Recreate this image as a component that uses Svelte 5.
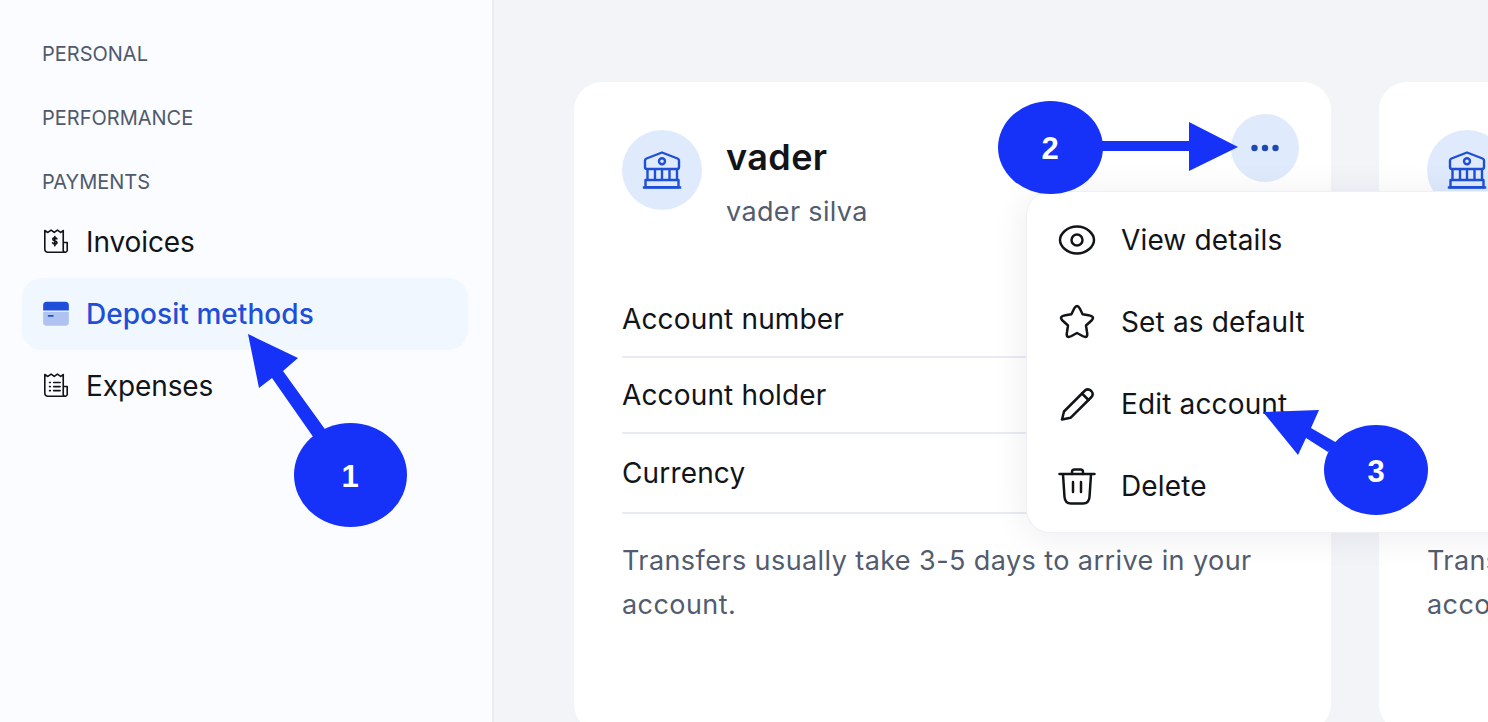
<script>
  const accounts = [
    { id: 1, name: 'vader', holder: 'vader silva', hasMenu: true },
    { id: 2, name: 'vader', holder: 'vader silva', hasMenu: false }
  ];
  const rows = ['Account number', 'Account holder', 'Currency'];
</script>

<div class="page">
  <aside class="sidebar">
    <div class="label">PERSONAL</div>
    <div class="label">PERFORMANCE</div>
    <div class="label open">PAYMENTS</div>
    <nav class="nav">
      <div class="nav-item">
        <svg class="nav-icon" viewBox="0 0 24 24" fill="none" stroke="currentColor" stroke-width="1.4" stroke-linejoin="round" stroke-linecap="round">
          <path d="M19 20.8H5a2.600 2.600 0 0 1-2.600-2.600V2.200L5 3.800l2.800-2 2.700 2 2.700-2 2.800 2 2.200-1.600v15.900a2 2 0 0 0 1.700 2.700 2 2 0 0 0 1.700-2.700v-5.700h-3.400" />
          <path d="M12.700 9.300c-.4-.5-.9-.8-1.700-.8-1 0-1.700.5-1.700 1.200 0 1.800 3.500.8 3.500 2.700 0 .8-.8 1.300-1.800 1.300-.8 0-1.500-.4-1.900-1M11 7.300v8" />
        </svg>
        <span>Invoices</span>
      </div>
      <div class="nav-item active">
        <svg class="nav-icon" viewBox="0 0 24 24">
          <path fill="#afc3f1" d="M1 10h22v9a3 3 0 0 1-3 3H4a3 3 0 0 1-3-3z" />
          <path fill="#1f4fd8" d="M4 1.500h16a3 3 0 0 1 3 3V9H1V4.500a3 3 0 0 1 3-3z" />
          <rect x="5" y="12.800" width="5" height="1.500" rx=".5" fill="#1f4fd8" />
        </svg>
        <span>Deposit methods</span>
      </div>
      <div class="nav-item">
        <svg class="nav-icon" viewBox="0 0 24 24" fill="none" stroke="currentColor" stroke-width="1.4" stroke-linejoin="round" stroke-linecap="round">
          <path d="M19 20.8H5a2.600 2.600 0 0 1-2.600-2.600V2.200L5 3.800l2.800-2 2.700 2 2.700-2 2.800 2 2.200-1.600v15.900a2 2 0 0 0 1.700 2.700 2 2 0 0 0 1.700-2.700v-5.700h-3.400" />
          <path d="M6.500 9h.6M10 9h5.500M6.500 12.500h.6M10 12.500h5.500M6.500 16h.6M10 16h5.500" />
        </svg>
        <span>Expenses</span>
      </div>
    </nav>
  </aside>

  <main class="content">
    {#each accounts as account (account.id)}
      <section class="card">
        <button class="more" aria-label="More actions">
          <svg width="28" height="8" viewBox="0 0 28 8" fill="#1e48b4">
            <circle cx="3.500" cy="4" r="3.200" />
            <circle cx="14" cy="4" r="3.200" />
            <circle cx="24.500" cy="4" r="3.200" />
          </svg>
        </button>

        <header class="head">
          <div class="bank">
            <svg width="40" height="40" viewBox="0 0 40 40" fill="none" stroke="#1f4fd8" stroke-width="2.400" stroke-linejoin="round">
              <path d="M20 2.500 4.500 8.500Q3 9.200 3 10.500V17q0 2 2 2h30q2 0 2-2v-6.500q0-1.300-1.500-2z" />
              <circle cx="20" cy="11.300" r="3" />
              <path d="M5.500 19v11M13 19v11M20 19v11M27.500 19v11M35 19v11" />
              <path d="M3.500 30h33v7.300h-33z" />
              <path d="M.8 37.500h38.400" />
            </svg>
          </div>
          <div class="who">
            <h2>{account.name}</h2>
            <p>{account.holder}</p>
          </div>
        </header>

        <div class="rows">
          {#each rows as row}
            <div class="row">{row}</div>
          {/each}
        </div>

        <p class="note">Transfers usually take 3-5 days to arrive in your account.</p>

        {#if account.hasMenu}
          <div class="menu">
            <div class="menu-item">
              <svg class="menu-icon" viewBox="0 0 40 40">
                <path d="M3 20C3 14 10 6.500 20 6.500S37 14 37 20 30 33.500 20 33.500 3 26 3 20z" />
                <circle cx="20" cy="20" r="5.500" />
              </svg>
              <span>View details</span>
            </div>
            <div class="menu-item">
              <svg class="menu-icon" viewBox="0 0 40 40">
                <path d="M17.300 6.300Q20 1.500 22.700 6.300L25.600 12.300 31.500 13.300Q38.500 14.500 34.500 18.500L29 23.500 30 30Q31.500 37 25.500 34L20 31 14.500 34Q8.500 37 10 30L11 23.500 5.500 18.500Q1.500 14.500 8.500 13.300L14.400 12.300z" />
              </svg>
              <span>Set as default</span>
            </div>
            <div class="menu-item">
              <svg class="menu-icon" viewBox="0 0 40 40">
                <path d="M5 35.500 7 27.500 28 6.500Q31 4 34.300 7 37 10 34.500 13L13.500 33.800z" />
                <path d="M25 9.500l6.500 6.500" />
              </svg>
              <span>Edit account</span>
            </div>
            <div class="menu-item">
              <svg class="menu-icon" viewBox="0 0 40 40">
                <path d="M2.500 8h35" />
                <path d="M15 8V6Q15 3.500 17.500 3.500H23.500Q26 3.500 26 6V8" />
                <path d="M6 8.500 7.500 31Q8 37.500 14 37.500H26Q32 37.500 32.500 31L34 8.500" />
                <path d="M16 16v10M24 16v10" />
              </svg>
              <span>Delete</span>
            </div>
          </div>
        {/if}
      </section>
    {/each}
  </main>

  <svg class="marks" width="1488" height="722" viewBox="0 0 1488 722">
    <g fill="#1632f8">
      <path d="M248 334 298 358 283 371 327 432 316 441 272 378 259 388z" />
      <ellipse cx="350.500" cy="475" rx="56.500" ry="52" />
      <path d="M1100 141H1189V122L1238 147 1189 171V151H1100z" />
      <ellipse cx="1050.500" cy="147.500" rx="52.500" ry="46.500" />
      <path d="M1263 412 1319 410 1311 428 1337 443 1328 452 1306 438 1298 455z" />
      <ellipse cx="1376" cy="470" rx="52" ry="45" />
    </g>
    <g class="num">
      <text x="350" y="487">1</text>
      <text x="1050" y="159">2</text>
      <text x="1376" y="482">3</text>
    </g>
  </svg>
</div>

<style>
  :global(body) {
    margin: 0;
    background: #f3f4f8;
    font-family: Inter, "Liberation Sans", sans-serif;
    color: #111418;
  }

  .page {
    position: relative;
    display: flex;
    height: 722px;
    overflow: hidden;
    background: #f3f4f8;
  }

  .sidebar {
    flex: 0 0 494px;
    box-sizing: border-box;
    padding: 42px 24px 0 22px;
    background: #fbfcff;
    border-right: 2px solid #e8ebf1;
  }

  .label {
    height: 24px;
    margin: 0 0 40px 20px;
    font-size: 20px;
    line-height: 24px;
    color: #4f5a6b;
  }

  .label.open {
    margin-bottom: 12px;
  }

  .nav {
    display: flex;
    flex-direction: column;
  }

  .nav-item {
    display: flex;
    align-items: center;
    gap: 16px;
    height: 72px;
    padding-left: 20px;
    border-radius: 20px;
    font-size: 28px;
    letter-spacing: -0.1px;
    color: #111418;
  }

  .nav-item.active {
    background: #f1f7ff;
    color: #1f4fd8;
    font-weight: 500;
    letter-spacing: 0.05px;
  }

  .nav-icon {
    width: 28px;
    height: 28px;
    flex-shrink: 0;
  }

  .content {
    display: flex;
    gap: 48px;
    padding: 82px 0 0 80px;
  }

  .card {
    position: relative;
    flex: 0 0 757px;
    box-sizing: border-box;
    height: 650px;
    padding: 48px;
    background: #fff;
    border-radius: 28px;
  }

  .more {
    position: absolute;
    top: 32px;
    right: 32px;
    display: flex;
    align-items: center;
    justify-content: center;
    width: 68px;
    height: 68px;
    padding: 0;
    border: 0;
    border-radius: 50%;
    background: #dfebfc;
  }

  .head {
    display: flex;
    gap: 24px;
    height: 152px;
  }

  .bank {
    display: flex;
    align-items: center;
    justify-content: center;
    width: 80px;
    height: 80px;
    border-radius: 50%;
    background: #dfebfc;
  }

  .who h2 {
    margin: 0;
    font-size: 36px;
    line-height: 54px;
    font-weight: 600;
    letter-spacing: 0.4px;
    color: #111418;
  }

  .who p {
    margin: 0;
    font-size: 27px;
    line-height: 56px;
    letter-spacing: 0.35px;
    color: #525c6e;
  }

  .row {
    box-sizing: border-box;
    display: flex;
    align-items: center;
    height: 76px;
    font-size: 28px;
    letter-spacing: 0.15px;
    border-bottom: 2px solid #e8ebf1;
  }

  .row:last-child {
    height: 80px;
  }

  .note {
    margin: 25px 0 0;
    font-size: 27px;
    line-height: 44px;
    letter-spacing: 0.42px;
    color: #525c6e;
  }

  .menu {
    position: absolute;
    top: 109px;
    left: 452px;
    z-index: 2;
    box-sizing: border-box;
    width: 520px;
    padding: 7px 30px 5px;
    background: #fff;
    border: 1px solid #eef0f4;
    border-radius: 24px;
    box-shadow: 0 4px 36px rgba(20, 30, 60, 0.08);
  }

  .menu-item {
    display: flex;
    align-items: center;
    gap: 24px;
    height: 82px;
    font-size: 28px;
    letter-spacing: 0.15px;
  }

  .menu-icon {
    width: 40px;
    height: 40px;
    flex-shrink: 0;
    fill: none;
    stroke: #111418;
    stroke-width: 2.5;
    stroke-linecap: round;
    stroke-linejoin: round;
  }

  .marks {
    position: absolute;
    top: 0;
    left: 0;
    z-index: 3;
    pointer-events: none;
  }

  .num text {
    font-family: "Liberation Sans", Arial, sans-serif;
    font-size: 31px;
    font-weight: 700;
    fill: #fff;
    text-anchor: middle;
  }
</style>
